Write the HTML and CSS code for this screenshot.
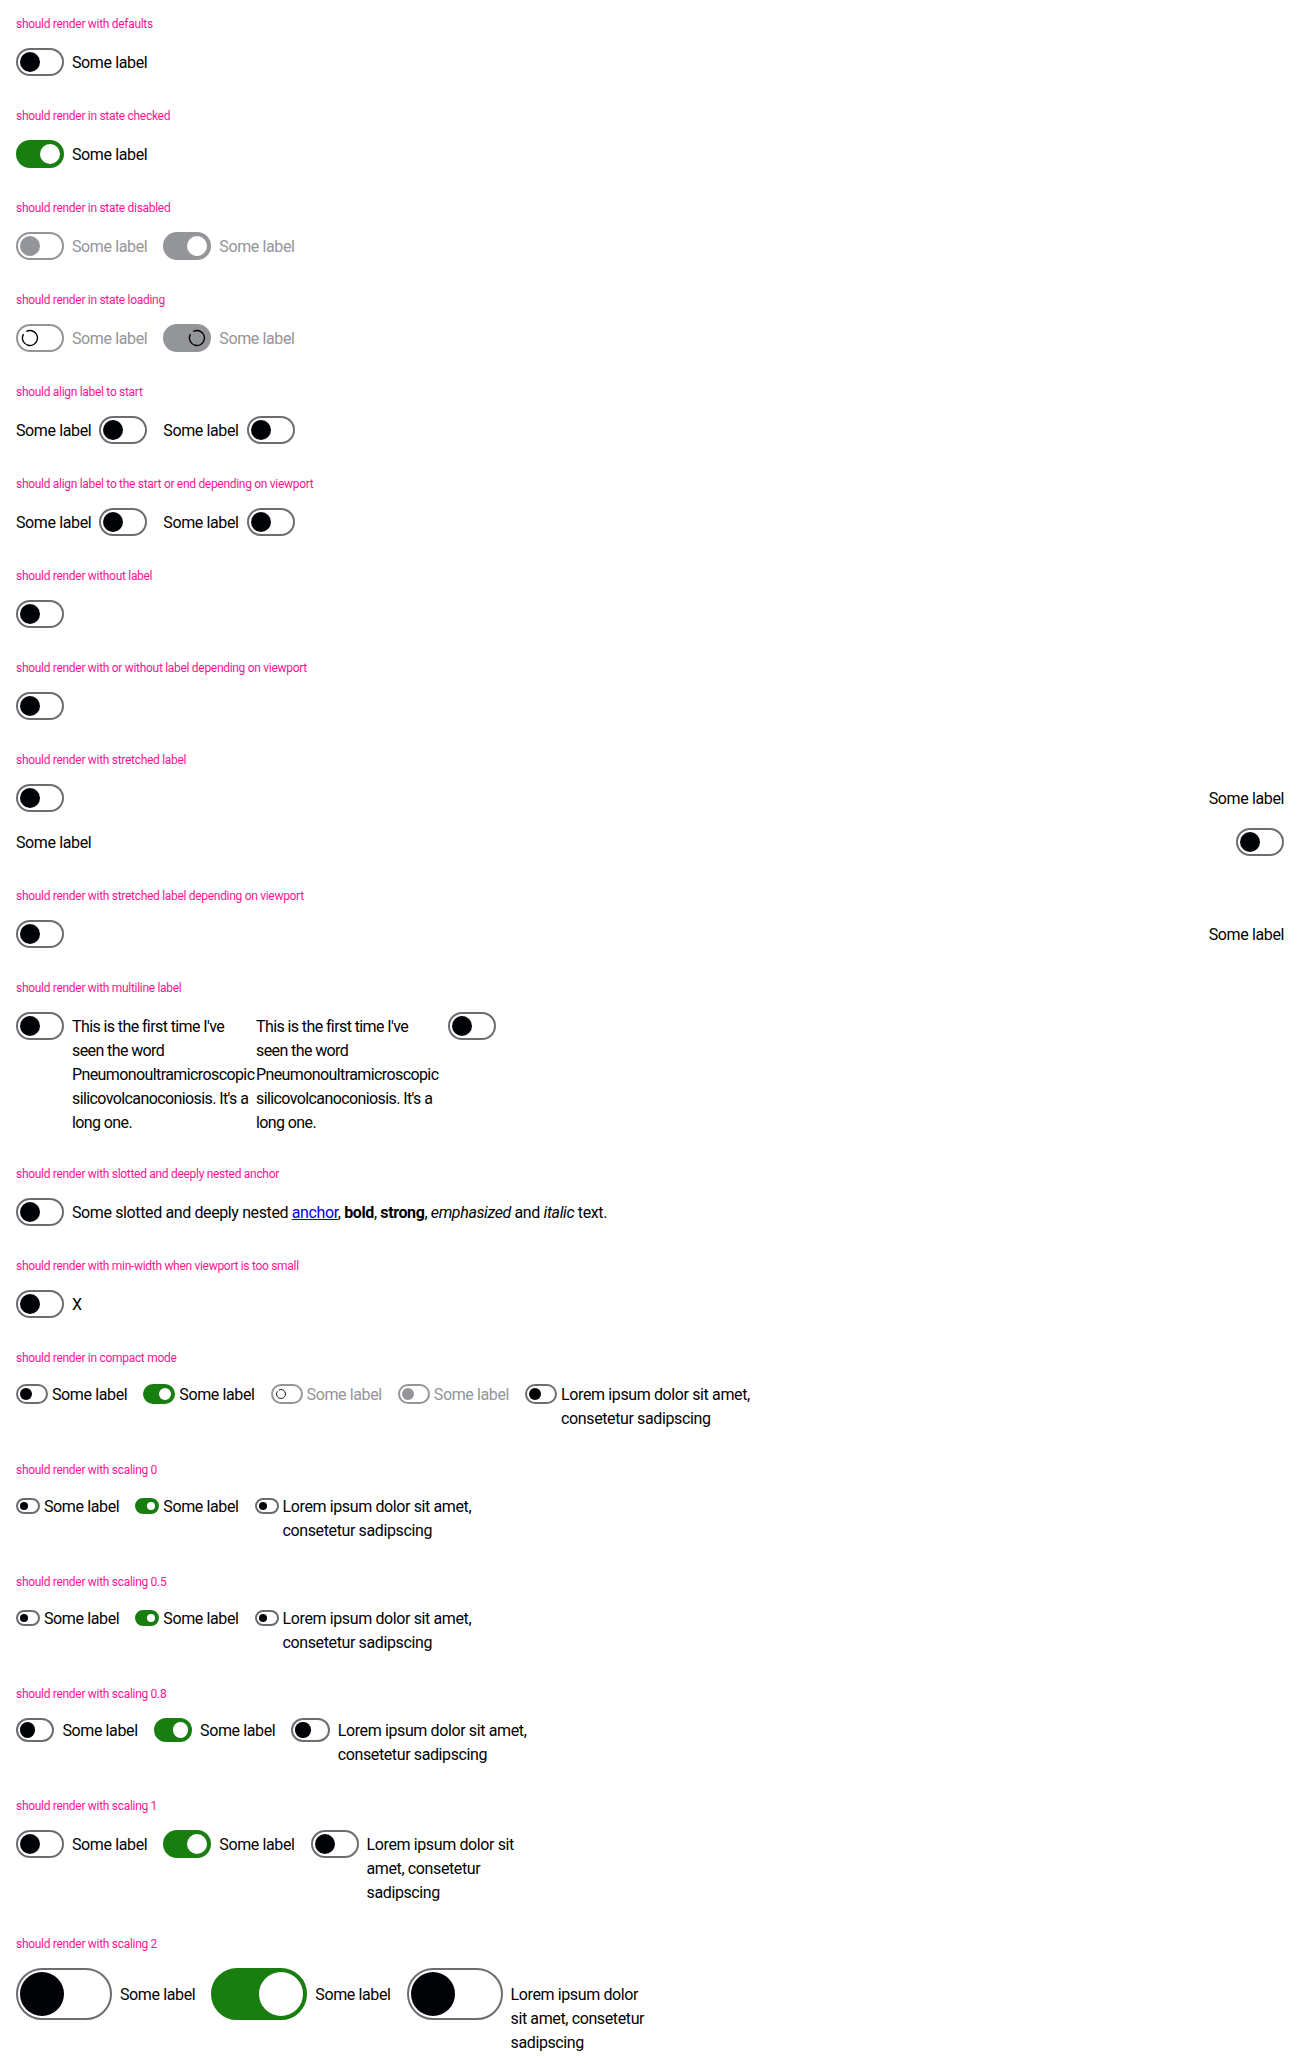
FILE: index.html
```html
<!DOCTYPE html>
<html lang="en">
<head>
<meta charset="utf-8">
<title>Switch</title>
<link rel="stylesheet" href="styles.css">
</head>
<body>

<div class="playground">
  <p class="title">should render with defaults</p>
  <div class="row">
    <label class="switch"><span class="box"><span class="track"><span class="knob"></span></span></span><span class="text">Some label</span></label>
  </div>
</div>

<div class="playground">
  <p class="title">should render in state checked</p>
  <div class="row">
    <label class="switch"><span class="box"><span class="track on"><span class="knob"></span></span></span><span class="text">Some label</span></label>
  </div>
</div>

<div class="playground">
  <p class="title">should render in state disabled</p>
  <div class="row">
    <label class="switch disabled"><span class="box"><span class="track"><span class="knob"></span></span></span><span class="text">Some label</span></label>
    <label class="switch disabled"><span class="box"><span class="track on"><span class="knob"></span></span></span><span class="text">Some label</span></label>
  </div>
</div>

<div class="playground">
  <p class="title">should render in state loading</p>
  <div class="row">
    <label class="switch loading"><span class="box"><span class="track"><span class="knob"><svg class="spin" viewBox="0 0 20 20"><circle cx="10" cy="10" r="7.5" class="arc"/></svg></span></span></span><span class="text">Some label</span></label>
    <label class="switch loading"><span class="box"><span class="track on"><span class="knob"><svg class="spin" viewBox="0 0 20 20"><circle cx="10" cy="10" r="7.5" class="arc"/></svg></span></span></span><span class="text">Some label</span></label>
  </div>
</div>

<div class="playground">
  <p class="title">should align label to start</p>
  <div class="row">
    <label class="switch"><span class="text">Some label</span><span class="box"><span class="track"><span class="knob"></span></span></span></label>
    <label class="switch"><span class="text">Some label</span><span class="box"><span class="track"><span class="knob"></span></span></span></label>
  </div>
</div>

<div class="playground">
  <p class="title">should align label to the start or end depending on viewport</p>
  <div class="row">
    <label class="switch"><span class="text">Some label</span><span class="box"><span class="track"><span class="knob"></span></span></span></label>
    <label class="switch"><span class="text">Some label</span><span class="box"><span class="track"><span class="knob"></span></span></span></label>
  </div>
</div>

<div class="playground">
  <p class="title">should render without label</p>
  <div class="row">
    <label class="switch"><span class="box"><span class="track"><span class="knob"></span></span></span></label>
  </div>
</div>

<div class="playground">
  <p class="title">should render with or without label depending on viewport</p>
  <div class="row">
    <label class="switch"><span class="box"><span class="track"><span class="knob"></span></span></span></label>
  </div>
</div>

<div class="playground">
  <p class="title">should render with stretched label</p>
  <div class="row">
    <label class="switch stretch"><span class="box"><span class="track"><span class="knob"></span></span></span><span class="text">Some label</span></label>
    <label class="switch stretch"><span class="text">Some label</span><span class="box"><span class="track"><span class="knob"></span></span></span></label>
  </div>
</div>

<div class="playground">
  <p class="title">should render with stretched label depending on viewport</p>
  <div class="row">
    <label class="switch stretch"><span class="box"><span class="track"><span class="knob"></span></span></span><span class="text">Some label</span></label>
  </div>
</div>

<div class="playground">
  <p class="title">should render with multiline label</p>
  <div class="row tight">
    <label class="switch w240"><span class="box"><span class="track"><span class="knob"></span></span></span><span class="text grow tightly">This is the first time I've seen the word Pneumonoultramicroscopicsilicovolcanoconiosis. It's a long one.</span></label>
    <label class="switch w240"><span class="text grow tightly">This is the first time I've seen the word Pneumonoultramicroscopicsilicovolcanoconiosis. It's a long one.</span><span class="box"><span class="track"><span class="knob"></span></span></span></label>
  </div>
</div>

<div class="playground">
  <p class="title">should render with slotted and deeply nested anchor</p>
  <div class="row">
    <label class="switch"><span class="box"><span class="track"><span class="knob"></span></span></span><span class="text">Some slotted and deeply nested <a href="#">anchor</a>, <b>bold</b>, <strong>strong</strong>, <em>emphasized</em> and <i>italic</i> text.</span></label>
  </div>
</div>

<div class="playground">
  <p class="title">should render with min-width when viewport is too small</p>
  <div class="row">
    <label class="switch"><span class="box"><span class="track"><span class="knob"></span></span></span><span class="text">X</span></label>
  </div>
</div>

<div class="playground">
  <p class="title">should render in compact mode</p>
  <div class="row">
    <label class="switch compact"><span class="box"><span class="track"><span class="knob"></span></span></span><span class="text">Some label</span></label>
    <label class="switch compact"><span class="box"><span class="track on"><span class="knob"></span></span></span><span class="text">Some label</span></label>
    <label class="switch compact loading"><span class="box"><span class="track"><span class="knob"><svg class="spin" viewBox="0 0 20 20"><circle cx="10" cy="10" r="7.5" class="arc"/></svg></span></span></span><span class="text">Some label</span></label>
    <label class="switch compact disabled"><span class="box"><span class="track"><span class="knob"></span></span></span><span class="text">Some label</span></label>
    <label class="switch compact w240"><span class="box"><span class="track"><span class="knob"></span></span></span><span class="text grow">Lorem ipsum dolor sit amet, consetetur sadipscing</span></label>
  </div>
</div>

<div class="playground">
  <p class="title">should render with scaling 0</p>
  <div class="row">
    <label class="switch s0"><span class="box"><span class="track"><span class="knob"></span></span></span><span class="text">Some label</span></label>
    <label class="switch s0"><span class="box"><span class="track on"><span class="knob"></span></span></span><span class="text">Some label</span></label>
    <label class="switch s0 w240"><span class="box"><span class="track"><span class="knob"></span></span></span><span class="text grow">Lorem ipsum dolor sit amet, consetetur sadipscing</span></label>
  </div>
</div>

<div class="playground">
  <p class="title">should render with scaling 0.5</p>
  <div class="row">
    <label class="switch s05"><span class="box"><span class="track"><span class="knob"></span></span></span><span class="text">Some label</span></label>
    <label class="switch s05"><span class="box"><span class="track on"><span class="knob"></span></span></span><span class="text">Some label</span></label>
    <label class="switch s05 w240"><span class="box"><span class="track"><span class="knob"></span></span></span><span class="text grow">Lorem ipsum dolor sit amet, consetetur sadipscing</span></label>
  </div>
</div>

<div class="playground">
  <p class="title">should render with scaling 0.8</p>
  <div class="row">
    <label class="switch s08"><span class="box"><span class="track"><span class="knob"></span></span></span><span class="text">Some label</span></label>
    <label class="switch s08"><span class="box"><span class="track on"><span class="knob"></span></span></span><span class="text">Some label</span></label>
    <label class="switch s08 w240"><span class="box"><span class="track"><span class="knob"></span></span></span><span class="text grow">Lorem ipsum dolor sit amet, consetetur sadipscing</span></label>
  </div>
</div>

<div class="playground">
  <p class="title">should render with scaling 1</p>
  <div class="row">
    <label class="switch"><span class="box"><span class="track"><span class="knob"></span></span></span><span class="text">Some label</span></label>
    <label class="switch"><span class="box"><span class="track on"><span class="knob"></span></span></span><span class="text">Some label</span></label>
    <label class="switch w240"><span class="box"><span class="track"><span class="knob"></span></span></span><span class="text grow">Lorem ipsum dolor sit amet, consetetur sadipscing</span></label>
  </div>
</div>

<div class="playground">
  <p class="title">should render with scaling 2</p>
  <div class="row">
    <label class="switch s2"><span class="box"><span class="track"><span class="knob"></span></span></span><span class="text">Some label</span></label>
    <label class="switch s2"><span class="box"><span class="track on"><span class="knob"></span></span></span><span class="text">Some label</span></label>
    <label class="switch s2 w240"><span class="box"><span class="track"><span class="knob"></span></span></span><span class="text grow">Lorem ipsum dolor sit amet, consetetur sadipscing</span></label>
  </div>
</div>

</body>
</html>
```
FILE: styles.css
```css
* {
  box-sizing: border-box;
}

html, body {
  background: #fff;
}

body {
  margin: 0;
  font-family: Roboto, "Liberation Sans", sans-serif;
  color: #010205;
}

.playground {
  padding: 16px;
}

.title {
  margin: 0 0 16px;
  font-size: 12px;
  line-height: 16px;
  letter-spacing: -0.3px;
  color: #ff1493;
}

.row {
  display: flex;
  flex-wrap: wrap;
  align-items: flex-start;
  gap: 16px;
}

.row.tight {
  gap: 0;
}

.switch {
  --k: 20px;
  --gap: 8px;
  --w: 240px;
  display: flex;
  align-items: flex-start;
  gap: var(--gap);
  font-size: 16px;
  line-height: 24px;
  letter-spacing: -0.38px;
  cursor: pointer;
}

.switch.compact { --k: 12px; --gap: 4px; }
.switch.s0 { --k: 8px; --gap: 4px; }
.switch.s05 { --k: 8px; --gap: 4px; }
.switch.s08 { --k: 15.2px; --gap: 8px; --w: 244px; }
.switch.s2 { --k: 44px; --gap: 8px; --w: 246px; }

.switch.stretch {
  width: 100%;
  justify-content: space-between;
}

.switch.w240 {
  width: var(--w);
}

.box {
  flex: none;
  display: flex;
  align-items: center;
  height: max(24px, calc(var(--k) + 8px));
}

.track {
  display: flex;
  align-items: center;
  width: calc(2 * var(--k) + 8px);
  height: calc(var(--k) + 8px);
  padding: 2px;
  border: 2px solid #6b6d70;
  border-radius: 9999px;
  background: #fff;
}

.track.on {
  justify-content: flex-end;
  background: #197e10;
  border-color: #197e10;
}

.knob {
  flex: none;
  display: block;
  width: var(--k);
  height: var(--k);
  border-radius: 50%;
  background: #010205;
}

.track.on .knob {
  background: #fff;
}

.text {
  display: block;
  padding-top: calc(max(0px, calc((var(--k) + 8px - 24px) / 2)) + 1px);
  margin-bottom: -1px;
  overflow-wrap: break-word;
}

.text.grow {
  flex: 1 1 0;
  min-width: 0;
}

.text.tightly {
  letter-spacing: -0.6px;
}

.text a {
  color: #0000ee;
  text-decoration: underline;
}

/* disabled */
.switch.disabled {
  cursor: not-allowed;
}
.switch.disabled .text,
.switch.loading .text {
  color: #949598;
}
.switch.disabled .track {
  border-color: #949598;
}
.switch.disabled .knob {
  background: #949598;
}
.switch.disabled .track.on {
  background: #949598;
}
.switch.disabled .track.on .knob {
  background: #fff;
}

/* loading */
.switch.loading .track {
  border-color: #949598;
}
.switch.loading .track.on {
  background: #949598;
}
.switch.loading .knob,
.switch.loading .track.on .knob {
  background: transparent;
}

.spin {
  display: block;
  width: 100%;
  height: 100%;
}

.spin .arc {
  fill: none;
  stroke: #010205;
  stroke-width: 1.4;
  stroke-dasharray: 43 47.2;
  transform: rotate(-120deg);
  transform-origin: 10px 10px;
}

.switch.loading .track:not(.on) .spin {
  background: #fff;
  border-radius: 50%;
}
```
